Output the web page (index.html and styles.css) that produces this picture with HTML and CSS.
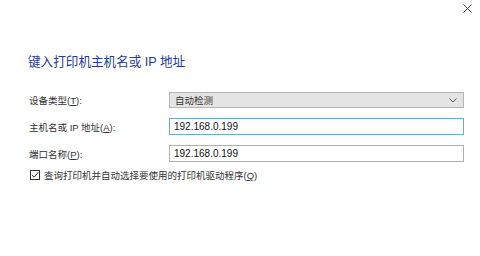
FILE: index.html
```html
<!DOCTYPE html>
<html lang="zh">
<head>
  <meta charset="UTF-8">
  <title>添加打印机</title>
  <link rel="stylesheet" href="styles.css">
</head>
<body>
  <div class="dialog">
    <div class="title-bar">
      <button class="close-btn" aria-label="关闭">
        <svg width="9" height="9" viewBox="0 0 9 9"><path d="M0.5 0.5 L8.5 8.5 M8.5 0.5 L0.5 8.5" stroke="#444" stroke-width="1" fill="none"/></svg>
      </button>
    </div>
    <div class="heading">键入打印机主机名或 IP 地址</div>

    <div class="form">
      <label class="form-label">设备类型(<u>T</u>):</label>
      <div class="select">
        <span>自动检测</span>
        <svg width="8" height="5" viewBox="0 0 8 5"><path d="M0.5 0.5 L4 4 L7.5 0.5" stroke="#555" stroke-width="1" fill="none"/></svg>
      </div>

      <label class="form-label">主机名或 IP 地址(<u>A</u>):</label>
      <div class="text-input focused">192.168.0.199</div>

      <label class="form-label">端口名称(<u>P</u>):</label>
      <div class="text-input">192.168.0.199</div>
    </div>

    <div class="check-row">
      <span class="checkbox">
        <svg width="9" height="8" viewBox="0 0 9 8"><path d="M1 4 L3.5 6.5 L8 1" stroke="#222" stroke-width="1.1" fill="none"/></svg>
      </span>
      <span>查询打印机并自动选择要使用的打印机驱动程序(<u>Q</u>)</span>
    </div>
  </div>
</body>
</html>
```

FILE: styles.css
```css
* { margin: 0; padding: 0; box-sizing: border-box; }
body {
  font-family: "Liberation Sans", "Noto Sans CJK SC", sans-serif;
  background-color: #fff;
  width: 480px;
  height: 256px;
  overflow: hidden;
  color: #222;
}
.dialog {
  display: flex;
  flex-direction: column;
}
.title-bar {
  height: 54px;
  display: flex;
  justify-content: flex-end;
  align-items: flex-start;
  padding: 4px 8px 0 0;
}
.close-btn {
  width: 9px;
  height: 9px;
  border: none;
  background: transparent;
  display: flex;
}
.heading {
  padding-left: 28px;
  font-size: 12.6px;
  line-height: 16px;
  color: #1e3c94;
  height: 38px;
}
.form {
  display: grid;
  grid-template-columns: 140px 295px;
  row-gap: 10px;
  padding-left: 29px;
  align-items: center;
}
.form-label {
  font-size: 9.5px;
  color: #333;
}
.form-label u { text-decoration: underline; }
.select {
  height: 16px;
  background-color: #e4e4e4;
  border: 1px solid #b5b5b5;
  display: flex;
  align-items: center;
  justify-content: space-between;
  padding: 0 6px 0 5px;
  font-size: 9.5px;
  color: #333;
}
.text-input {
  height: 17px;
  border: 1px solid #b0b0b0;
  background: #fff;
  font-size: 10px;
  line-height: 15px;
  padding-left: 4px;
  color: #111;
}
.text-input.focused {
  border-color: #6fa8dc;
}
.check-row {
  display: flex;
  align-items: center;
  gap: 4px;
  padding-left: 30px;
  margin-top: 6px;
  font-size: 9.5px;
  color: #333;
}
.checkbox {
  width: 10px;
  height: 10px;
  border: 1px solid #333;
  display: flex;
  align-items: center;
  justify-content: center;
}
```
